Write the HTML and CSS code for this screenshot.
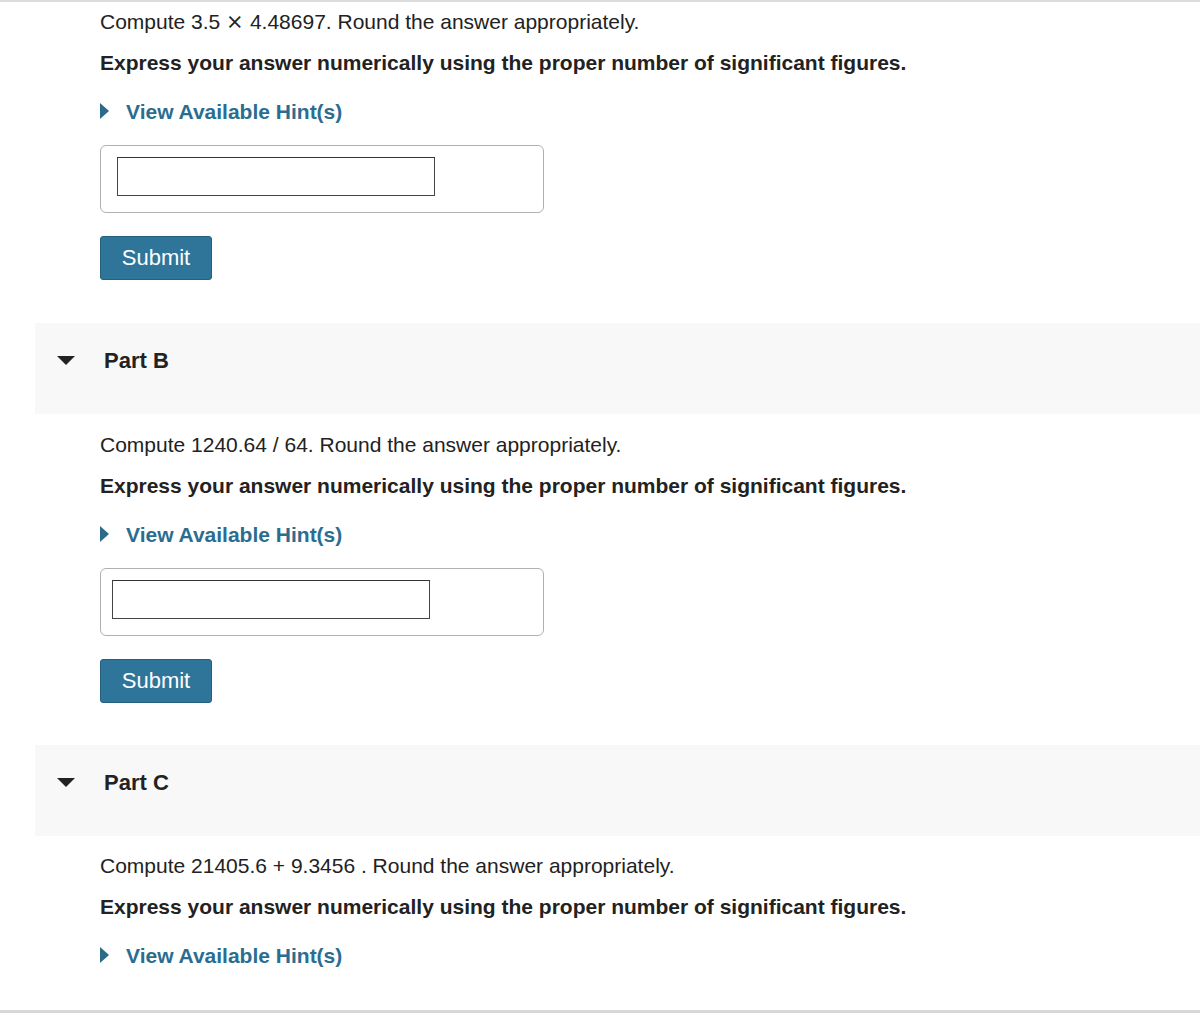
FILE: index.html
```html
<!DOCTYPE html>
<html>
<head>
<meta charset="utf-8">
<link rel="stylesheet" href="styles.css">
</head>
<body>
<div class="page">
  <div class="part-body first">
    <p class="question">Compute 3.5 &#x2A2F; 4.48697. Round the answer appropriately.</p>
    <p class="instruction">Express your answer numerically using the proper number of significant figures.</p>
    <div class="hint"><span class="hint-arrow"></span><span class="hint-text">View Available Hint(s)</span></div>
    <div class="answer-box"><input class="answer-input a1" type="text"></div>
    <button class="submit">Submit</button>
  </div>

  <div class="part-header"><span class="caret"></span><span class="part-title">Part B</span></div>
  <div class="part-body">
    <p class="question">Compute 1240.64 / 64. Round the answer appropriately.</p>
    <p class="instruction">Express your answer numerically using the proper number of significant figures.</p>
    <div class="hint"><span class="hint-arrow"></span><span class="hint-text">View Available Hint(s)</span></div>
    <div class="answer-box"><input class="answer-input a2" type="text"></div>
    <button class="submit">Submit</button>
  </div>

  <div class="part-header"><span class="caret"></span><span class="part-title">Part C</span></div>
  <div class="part-body last">
    <p class="question">Compute 21405.6 + 9.3456 . Round the answer appropriately.</p>
    <p class="instruction">Express your answer numerically using the proper number of significant figures.</p>
    <div class="hint"><span class="hint-arrow"></span><span class="hint-text">View Available Hint(s)</span></div>
  </div>
</div>
</body>
</html>
```

FILE: styles.css
```css
html, body {
  margin: 0;
  padding: 0;
  background: #fff;
}
body {
  font-family: "Liberation Sans", Arial, Helvetica, sans-serif;
  color: #222;
}
.page {
  border-top: 2px solid #dcdcdc;
  border-bottom: 3px solid #d8d8d8;
  height: 1013px;
  box-sizing: border-box;
}
.part-body {
  padding-left: 100px;
  padding-top: 19px;
  padding-bottom: 42px;
}
.part-body.first {
  padding-top: 8px;
  padding-bottom: 43px;
}
.part-body.last {
  padding-top: 18px;
  padding-bottom: 0;
}
.question {
  margin: 0;
  font-size: 21px;
  line-height: 24px;
  color: #222;
}
.instruction {
  margin: 17px 0 0;
  font-size: 21px;
  line-height: 24px;
  font-weight: bold;
  color: #222;
}
.hint {
  margin-top: 25px;
  display: flex;
  align-items: center;
  height: 24px;
}
.hint-arrow {
  width: 0;
  height: 0;
  border-top: 8px solid transparent;
  border-bottom: 8px solid transparent;
  border-left: 9px solid #2c6a8a;
  margin-right: 17px;
  margin-top: -2px;
}
.hint-text {
  font-size: 21px;
  font-weight: bold;
  color: #2b6d90;
}
.answer-box {
  margin-top: 21px;
  width: 444px;
  height: 68px;
  box-sizing: border-box;
  border: 1.5px solid #b0b0b0;
  border-radius: 6px;
  padding-top: 11px;
  padding-left: 16px;
}
.answer-input {
  display: block;
  width: 318px;
  height: 39px;
  box-sizing: border-box;
  border: 1px solid #444;
  border-top-color: #333;
  margin: 0;
  padding: 0;
  background: #fff;
}
.answer-input.a2 {
  margin-left: -5px;
}
.submit {
  display: block;
  margin-top: 23px;
  width: 112px;
  height: 44px;
  background: #2f7599;
  border: 1px solid #25607e;
  border-radius: 3px;
  color: #fff;
  font-family: "Liberation Sans", Arial, Helvetica, sans-serif;
  font-size: 22px;
  padding: 0;
}
.part-header {
  margin-left: 35px;
  height: 91px;
  box-sizing: border-box;
  background: #f8f8f8;
  display: flex;
  align-items: flex-start;
  padding-top: 25px;
}
.caret {
  width: 0;
  height: 0;
  border-left: 9px solid transparent;
  border-right: 9px solid transparent;
  border-top: 9px solid #222;
  margin-left: 22px;
  margin-right: 29px;
  margin-top: 8px;
}
.part-title {
  font-size: 22px;
  line-height: 26px;
  font-weight: bold;
  color: #222;
}
```
